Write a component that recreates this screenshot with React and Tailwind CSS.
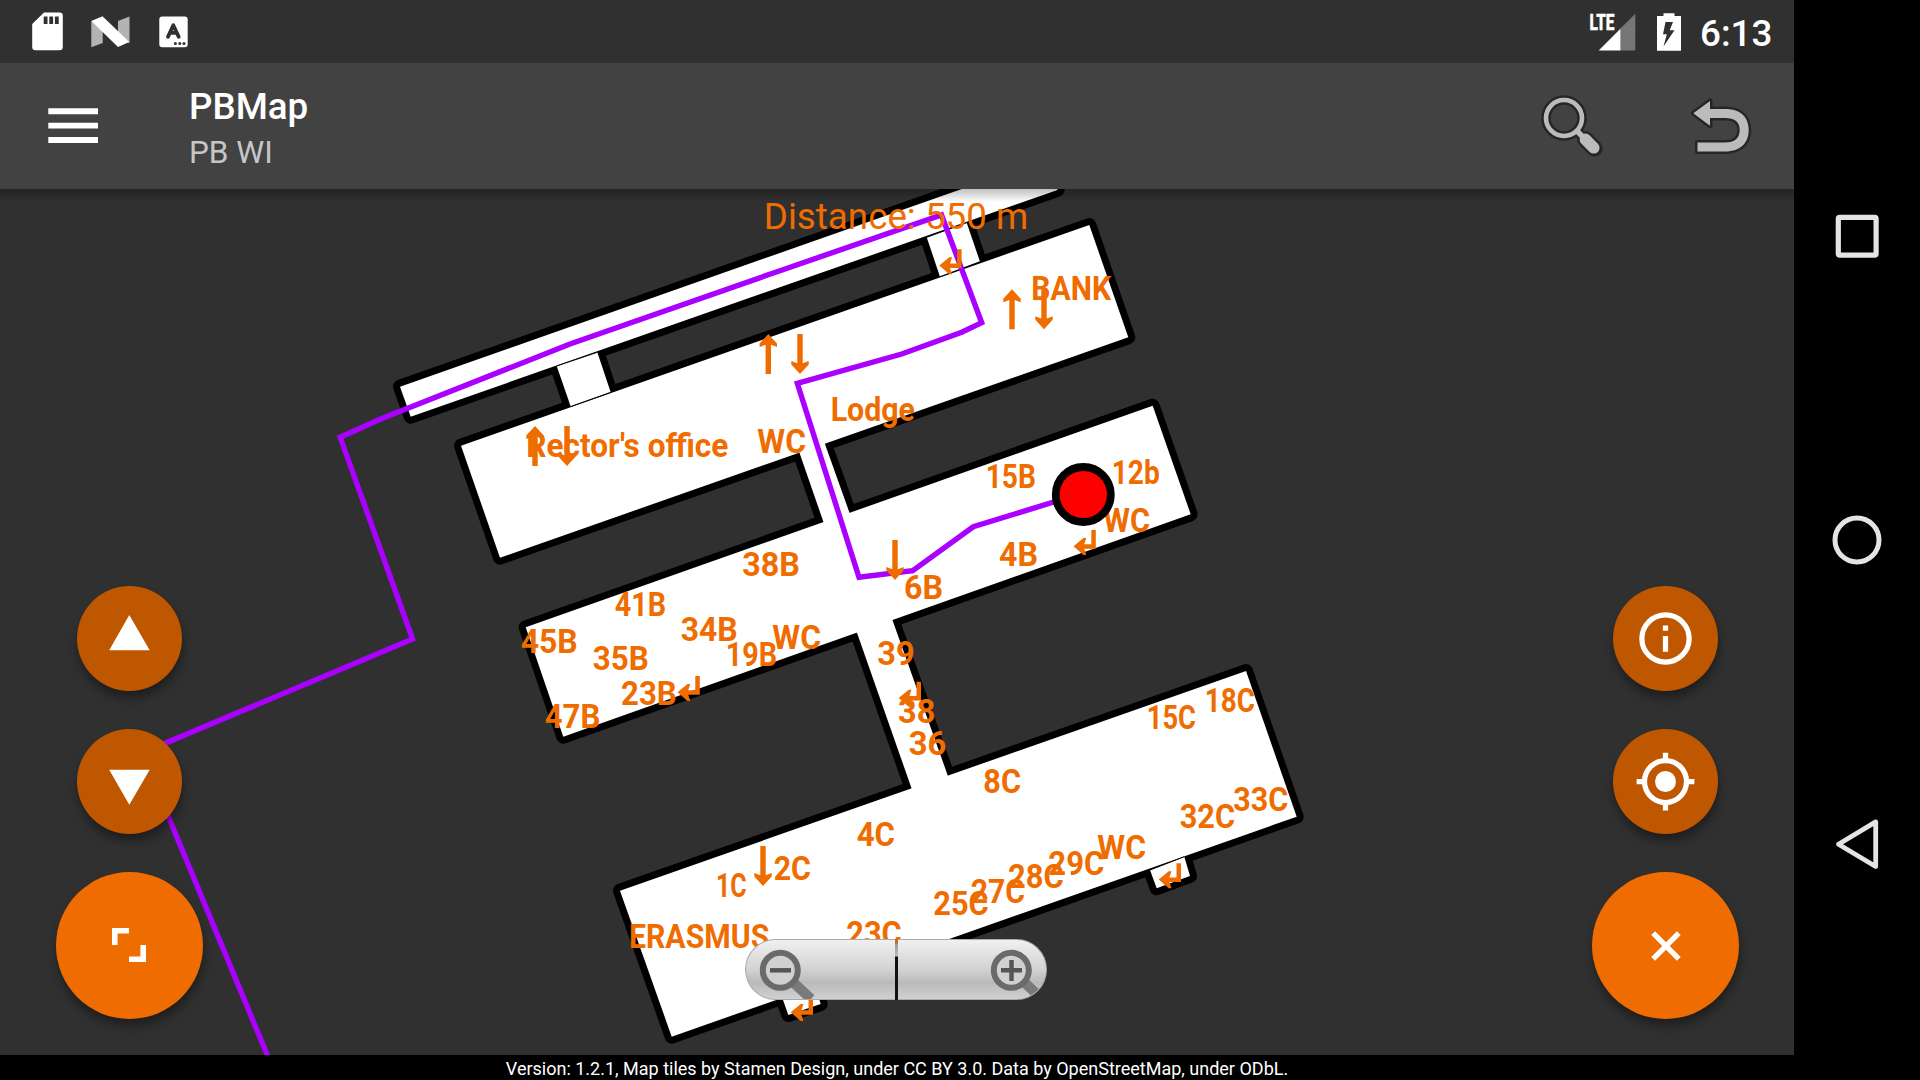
import React from "react";

const ORANGE = "#ef6c00";

const BUILDINGS = [
  "400,386.7 410.7,416.7 1057.5,190 1047,159",
  "461,445.7 500,557.7 1128.3,337.3 1089.3,225",
  "525.7,627.3 563.3,736.7 1190.7,514.3 1152.7,405.7",
  "620,890.7 671.7,1036.7 1296.7,816.7 1246,671",
];

const CONNECTORS = [
  "556.7,366 570.7,406.5 610.7,392.3 597.3,352.3",
  "926.7,237.3 940,276.7 980,261.7 966.7,222.7",
  "798.5,450 824.5,525 851,517 823.5,440",
  "856,630 912.5,791 949,779 891,616",
  "1150,870 1156.7,888.3 1190,876 1184.3,856.7",
  "777,983 788.3,1015 820.7,1004 812,975",
];

const JOINTS = [
  [556.7, 366, 597.3, 352.3],
  [570.7, 406.5, 610.7, 392.3],
  [926.7, 237.3, 966.7, 222.7],
  [940, 276.7, 980, 261.7],
  [1150, 870, 1184.3, 856.7],
];

// [text, left edge, right edge, baseline]
const LABELS = [
  ["38B", 743.3, 799, 575.7],
  ["41B", 615.7, 665, 615],
  ["45B", 521.7, 576.7, 652],
  ["34B", 681.7, 736.7, 640],
  ["35B", 593.7, 647.7, 669],
  ["19B", 726.7, 776, 665.7],
  ["WC", 773.3, 820, 648.7],
  ["23B", 622, 675.7, 704],
  ["47B", 545.7, 599.3, 727],
  ["39", 878.3, 913.7, 664],
  ["38", 899, 934.3, 722],
  ["36", 909.7, 945.3, 754.7],
  ["8C", 984.3, 1020, 792.3],
  ["6B", 905, 942, 598.7],
  ["4B", 1000, 1037, 565.7],
  ["15B", 986.7, 1035, 487.7],
  ["12b", 1112.7, 1158.7, 483.7],
  ["WC", 1104.3, 1149, 531.7],
  ["Lodge", 831.7, 914, 420.7],
  ["WC", 758.3, 805, 452.7],
  ["BANK", 1032.3, 1110, 299],
  ["Rector's office", 527.3, 727.3, 456.3],
  ["18C", 1205.7, 1254, 711.7],
  ["15C", 1147.7, 1195, 728.7],
  ["33C", 1234.3, 1287.3, 810],
  ["32C", 1180.7, 1234, 827.7],
  ["WC", 1098.3, 1145, 858.7],
  ["29C", 1049.3, 1103.3, 874.7],
  ["28C", 1009, 1062.7, 887.7],
  ["27C", 971.7, 1024, 902],
  ["25C", 934.3, 987.7, 914],
  ["4C", 857.7, 894, 845.3],
  ["2C", 774.7, 810, 879],
  ["1C", 717, 745.7, 896.7],
  ["23C", 847.3, 900.7, 944],
  ["ERASMUS", 630, 768.3, 947.7],
];

const UP_ARROWS = [[768.3, 334], [1012, 289.3], [535, 426]];
const DOWN_ARROWS = [[800, 334], [1044, 289.3], [567, 426], [895, 540], [763, 846]];
const ENTRANCES = [
  [939.3, 249.3],
  [1073.5, 530],
  [677.5, 676],
  [898.7, 681.7],
  [1158.7, 863.3],
  [790.7, 996],
];

const ROUTE =
  "1083,493 973.3,526.7 912.7,570.7 859,577.3 797.3,383.3 901.7,354 961.7,332.3 981.7,322.7 941.5,215 780,270.7 570,344 380,419.3 340.2,437.3 412.6,639 142,753 268.5,1058";

function StatusBar() {
  return (
    <div className="flex h-[63px] shrink-0 items-center justify-between bg-[#303030] pl-8 pr-[21px]">
      <div className="flex items-center gap-[28px]">
        <svg width="31" height="39" viewBox="0 0 31 39">
          <path d="M12 0.5H27.5a3.3 3.3 0 0 1 3.3 3.3V35a3.3 3.3 0 0 1-3.3 3.3H3.5A3.3 3.3 0 0 1 .2 35V12Z" fill="#fff" />
          <path d="M11.7 4.5h3.8v7.5h-3.8zM17.3 4.5h3.8v7.5h-3.8zM22.9 4.5h3.8v7.5h-3.8z" fill="#303030" />
        </svg>
        <svg width="39" height="32" viewBox="0 0 39 32">
          <path d="M0.3 5 11.7 10V27L0.3 31.2ZM38.5 0.5 27 5V22L38.5 27Z" fill="#b3b3b3" />
          <path d="M0.3 5 11.5 0.3 38.3 26 27 31Z" fill="#fff" />
        </svg>
        <svg width="29" height="32" viewBox="0 0 29 32" className="ml-px">
          <rect x="0.3" y="0.5" width="28.4" height="30.7" rx="3" fill="#fff" />
          <path d="M9 20.7 14.3 9.3 19.7 20.7M11 16.8H17.6" fill="none" stroke="#303030" strokeWidth="3.8" strokeLinecap="round" strokeLinejoin="round" />
          <circle cx="16.4" cy="27.6" r="1.5" fill="#303030" />
          <circle cx="20.8" cy="27.6" r="1.5" fill="#303030" />
          <circle cx="25" cy="27.6" r="1.5" fill="#303030" />
        </svg>
      </div>
      <div className="flex items-center">
        <svg width="47" height="38" viewBox="1589 12 47 38" className="overflow-visible">
          <path d="M1598.7 49.5 1620.7 27.5V49.5Z" fill="#fff" />
          <path d="M1620.7 27.3 1635.3 12.7V49.5H1620.7Z" fill="#767676" />
          <text x="1589.5" y="29" fontSize="22" fontWeight="800" fill="#fff" stroke="#fff" strokeWidth="0.5" textLength="25" lengthAdjust="spacingAndGlyphs">LTE</text>
        </svg>
        <svg width="24" height="38" viewBox="0 0 24 38" className="ml-[21px]">
          <path d="M6.5 0.2H17.5V3H24V37.7H0V3H6.5Z" fill="#fff" />
          <path d="M8.5 9H16L12.7 17.3H17.5L6.5 33.5 9.8 21.3H6Z" fill="#303030" />
        </svg>
        <span className="ml-[19px] mr-px mt-[5px] w-[72px] whitespace-nowrap text-[36.75px] font-medium leading-none text-white">6:13</span>
      </div>
    </div>
  );
}

function SearchIcon() {
  return (
    <svg width="76" height="76" viewBox="1534 88 76 76">
      <g stroke="#262626" fill="none">
        <circle cx="1564" cy="118" r="18" strokeWidth="9.5" />
        <path d="M1577 131 1583 137" strokeWidth="10" />
        <path d="M1585.3 139.3 1594.5 148.5" strokeWidth="16.5" strokeLinecap="round" />
      </g>
      <g stroke="#bbb" fill="none">
        <circle cx="1564" cy="118" r="18" strokeWidth="4.6" />
        <path d="M1576.5 130.5 1585 139" strokeWidth="5.4" />
        <path d="M1585.4 139.4 1593.8 147.8" strokeWidth="11.6" strokeLinecap="round" />
      </g>
    </svg>
  );
}

function BackArrowIcon() {
  return (
    <svg width="76" height="76" viewBox="1683 88 76 76">
      <path
        d="M1693.3 113.3 1710 101V109H1725C1741 109 1748.7 117.5 1748.7 130S1741 151.5 1725 151.5H1697.5V142.5H1725C1735 142.5 1739.7 138 1739.7 130S1735 118 1725 118H1710V125.7Z"
        fill="#bbb"
        stroke="#262626"
        strokeWidth="5"
        strokeLinejoin="round"
        paintOrder="stroke"
      />
    </svg>
  );
}

function Toolbar() {
  return (
    <div className="relative z-10 flex h-[126px] shrink-0 items-center bg-[#424242]">
      <svg width="50" height="36" viewBox="0 0 50 36" className="ml-12">
        <path d="M0.3 0.3H50V6.2H0.3ZM0.3 14.8H50V20.6H0.3ZM0.3 29H50V34.9H0.3Z" fill="#fff" />
      </svg>
      <div className="ml-[91px] flex flex-1 flex-col pt-[6px]">
        <span className="text-[36.75px] font-medium leading-[43px] text-white">PBMap</span>
        <span className="mt-[5px] text-[31.5px] leading-[40px] text-[#c6c6c6]">PB WI</span>
      </div>
      <SearchIcon />
      <div className="ml-[73px] mr-[35px]">
        <BackArrowIcon />
      </div>
      <div className="absolute inset-x-0 top-full h-[13px] bg-gradient-to-b from-black/25 to-transparent" />
    </div>
  );
}

function CampusMap() {
  return (
    <svg className="absolute inset-0" width="1794" height="866" viewBox="0 189 1794 866">
      <g fill="#000" stroke="#000" strokeWidth="14" strokeLinejoin="round">
        {BUILDINGS.map((p) => <polygon key={p} points={p} />)}
        {CONNECTORS.map((p) => <polygon key={p} points={p} />)}
      </g>
      <g fill="#fff">
        {BUILDINGS.map((p) => <polygon key={p} points={p} />)}
        {CONNECTORS.map((p) => <polygon key={p} points={p} />)}
      </g>
      <g stroke="#000" strokeWidth="1">
        {JOINTS.map(([x1, y1, x2, y2]) => <line key={x1} x1={x1} y1={y1} x2={x2} y2={y2} />)}
      </g>
      <polyline points={ROUTE} fill="none" stroke="#aa00ff" strokeWidth="5.4" strokeLinejoin="miter" />
      <g fill={ORANGE}>
        {LABELS.map(([t, x1, x2, y]) => (
          <text key={t + x1} x={x1 - 1} y={y + 0.5} fontSize="33" fontWeight="700" textLength={x2 - x1 + 2} lengthAdjust="spacingAndGlyphs">
            {t}
          </text>
        ))}
        {UP_ARROWS.map(([x, y]) => (
          <path key={x} transform={`translate(${x} ${y})`} d="M0 0 8.7 9.5V13L2.7 10.8V40H-2.7V10.8L-8.7 13V9.5Z" />
        ))}
        {DOWN_ARROWS.map(([x, y]) => (
          <path key={x} transform={`translate(${x} ${y})`} d="M0 40 8.7 30.5V27L2.7 29.2V0H-2.7V29.2L-8.7 27V30.5Z" />
        ))}
        {ENTRANCES.map(([x, y]) => (
          <path key={x} transform={`translate(${x} ${y})`} d="M0 16.3 10 8H12.8L10.7 14.2H17.8V0H22.3V18.8H10.7L12.8 25H10Z" />
        ))}
      </g>
      <circle cx="1083.3" cy="494.5" r="27.5" fill="#f00" stroke="#000" strokeWidth="7.8" />
    </svg>
  );
}

function SmallFab({ children }) {
  return (
    <button className="flex size-[105px] items-center justify-center rounded-full bg-[#bf5600] shadow-[1px_7px_10px_rgba(0,0,0,0.38)]">
      {children}
    </button>
  );
}

function LargeFab({ children }) {
  return (
    <button className="flex size-[147px] items-center justify-center rounded-full bg-[#ef6c00] shadow-[1px_7px_10px_rgba(0,0,0,0.38)]">
      {children}
    </button>
  );
}

function ZoomControls() {
  return (
    <div className="flex h-[61px] w-[302px]">
      <div className="h-full flex-1 rounded-l-full border border-r-0 border-[#aaa] bg-[linear-gradient(to_bottom,#f0f0f0_0,#d2d2d2_50%,#bababa_72%,#d0d0d0_100%)]">
        <svg width="149" height="59" viewBox="747 940 149 59">
          <path d="M795 983 812 999" stroke="#7a7a7a" strokeWidth="10" />
          <circle cx="781.3" cy="970.3" r="17.5" fill="#d0d0d0" stroke="#6a6a6a" strokeWidth="6" />
          <path d="M771 970.3H792" stroke="#555" strokeWidth="4.5" />
        </svg>
      </div>
      <div className="h-full w-[3px] bg-[linear-gradient(to_bottom,#c86a20_0,#c86a20_4px,#999_5px,#bbb_17px,#111_18px,#111_100%)]" />
      <div className="h-full flex-1 overflow-hidden rounded-r-full border border-l-0 border-[#aaa] bg-[linear-gradient(to_bottom,#f0f0f0_0,#d2d2d2_50%,#bababa_72%,#d0d0d0_100%)]">
        <svg width="149" height="59" viewBox="898 940 149 59">
          <path d="M1025 983 1042 999" stroke="#7a7a7a" strokeWidth="10" />
          <circle cx="1011.3" cy="970.3" r="17.5" fill="#d0d0d0" stroke="#6a6a6a" strokeWidth="6" />
          <path d="M1001 970.3H1022M1011.5 960V981" stroke="#555" strokeWidth="4.5" />
        </svg>
      </div>
    </div>
  );
}

function MapArea() {
  return (
    <div className="relative h-[866px] overflow-hidden bg-[#303030]">
      <CampusMap />
      <div className="relative flex h-full items-end justify-between pb-9 pl-14 pr-[55px]">
        <div className="flex flex-col items-center gap-[38px]">
          <SmallFab>
            <svg width="105" height="105" viewBox="0 0 105 105"><path d="M52.3 29 72.7 64.2H32.2Z" fill="#fff" /></svg>
          </SmallFab>
          <SmallFab>
            <svg width="105" height="105" viewBox="0 0 105 105"><path d="M52.3 75.8 72.7 40.8H32.2Z" fill="#fff" /></svg>
          </SmallFab>
          <LargeFab>
            <svg width="34" height="34" viewBox="0 0 34 34" className="-mt-px mr-px">
              <path d="M17 2.8H2.8V17M17 31.2H31.2V17" fill="none" stroke="#fff" strokeWidth="5.6" />
            </svg>
          </LargeFab>
        </div>
        <div className="mr-[3px] flex h-full flex-col items-center justify-between pb-[19px] pt-[6px]">
          <span className="whitespace-nowrap text-[36.75px] leading-[43px] text-[#ef6c00]">Distance: 550 m</span>
          <ZoomControls />
        </div>
        <div className="flex flex-col items-center gap-[38px]">
          <SmallFab>
            <svg width="63" height="63" viewBox="0 0 24 24">
              <circle cx="12" cy="12" r="9" fill="none" stroke="#fff" strokeWidth="2" />
              <path d="M11 6h2v2h-2zM11 10h2v6h-2z" transform="translate(0 1)" fill="#fff" />
            </svg>
          </SmallFab>
          <SmallFab>
            <svg width="63" height="63" viewBox="0 0 24 24">
              <circle cx="12" cy="12" r="8" fill="none" stroke="#fff" strokeWidth="2" />
              <circle cx="12" cy="12" r="4" fill="#fff" />
              <path d="M11 1h2v3h-2zM11 20h2v3h-2zM1 11h3v2H1zM20 11h3v2h-3z" fill="#fff" />
            </svg>
          </SmallFab>
          <LargeFab>
            <svg width="30" height="30" viewBox="0 0 30 30">
              <path d="M2.2 2.2 27.8 27.8M27.8 2.2 2.2 27.8" stroke="#fff" strokeWidth="5.4" />
            </svg>
          </LargeFab>
        </div>
      </div>
    </div>
  );
}

function NavBar() {
  return (
    <div className="flex w-[126px] flex-col items-center justify-between bg-black py-[206px]">
      <svg width="60" height="60" viewBox="0 0 60 60">
        <rect x="11.3" y="11.3" width="37.8" height="37.8" rx="1.5" fill="none" stroke="#e4e4e4" strokeWidth="5.2" />
      </svg>
      <svg width="60" height="60" viewBox="0 0 60 60">
        <circle cx="30" cy="30" r="22" fill="none" stroke="#e4e4e4" strokeWidth="5" />
      </svg>
      <svg width="60" height="60" viewBox="0 0 60 60">
        <path d="M11.5 30.2 48.7 7.9V52.5Z" fill="none" stroke="#e4e4e4" strokeWidth="4.8" strokeLinejoin="round" />
      </svg>
    </div>
  );
}

export default function App() {
  return (
    <div className="flex h-[1080px] w-[1920px] overflow-hidden bg-black font-['Roboto',sans-serif]">
      <div className="flex w-[1794px] flex-col">
        <StatusBar />
        <Toolbar />
        <MapArea />
        <div className="flex h-[25px] items-center justify-center bg-black text-[18px] leading-none text-white">
          <span className="mt-[3px] whitespace-nowrap">Version: 1.2.1, Map tiles by Stamen Design, under CC BY 3.0. Data by OpenStreetMap, under ODbL.</span>
        </div>
      </div>
      <NavBar />
    </div>
  );
}
